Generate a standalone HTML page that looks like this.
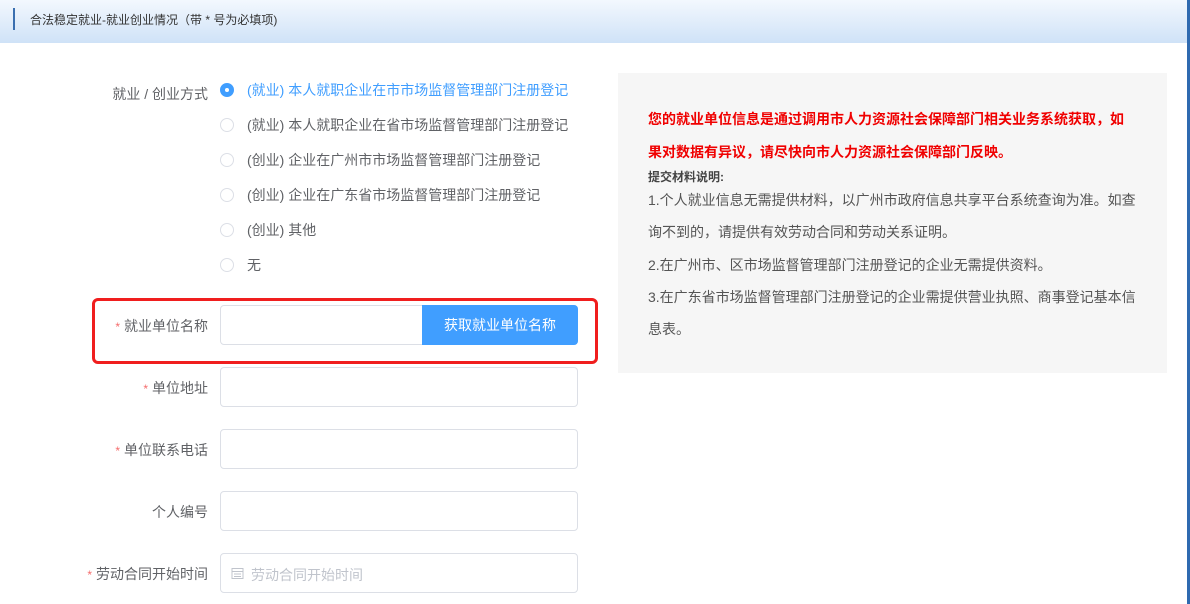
<!DOCTYPE html>
<html><head><meta charset="utf-8"><style>
*{margin:0;padding:0;box-sizing:border-box}
body{width:1190px;height:604px;background:#fff;font-family:"Liberation Sans","Noto Sans CJK SC",sans-serif;position:relative;overflow:hidden;color:#606266}
.hdr{position:absolute;left:0;top:0;width:1190px;height:43px;background:linear-gradient(#f3f8fe,#cfe2f7)}
.bar{position:absolute;left:13px;top:8px;width:2px;height:22px;background:#3a6fb0}
.ht{position:absolute;left:30px;top:11px;font-size:12px;color:#333}
.rb{position:absolute;right:0;top:0;width:3px;height:604px;background:#2f6ab0}
.lbl{position:absolute;right:982px;font-size:14px;color:#606266;white-space:nowrap}
.lbl i{color:#f56c6c;font-style:normal;margin-right:4px;font-size:12px}
.radio{position:absolute;left:220px;font-size:14px;color:#606266;white-space:nowrap;height:20px;line-height:20px}
.radio b{display:inline-block;width:14px;height:14px;border:1px solid #dcdfe6;border-radius:50%;vertical-align:-2px;margin-right:13px;position:relative}
.radio.on{color:#409eff}
.radio.on b{background:#409eff;border-color:#409eff}
.radio.on b:after{content:"";position:absolute;left:4px;top:4px;width:4px;height:4px;border-radius:50%;background:#fff}
.inp{position:absolute;left:220px;width:358px;height:40px;border:1px solid #dcdfe6;border-radius:4px;background:#fff}
.btn{position:absolute;left:422px;top:305px;width:156px;height:40px;background:#409eff;border-radius:0 4px 4px 0;color:#fff;font-size:14px;text-align:center;line-height:40px}
.red{position:absolute;left:92px;top:298px;width:506px;height:66px;border:3px solid #f01e1e;border-radius:6px}
.panel{position:absolute;left:618px;top:73px;width:549px;height:300px;background:#f6f6f6}
.p{position:absolute;left:648px;font-size:14px;color:#555;white-space:nowrap}
.pr{color:#f00000;font-weight:bold}
</style></head><body>
<div class="hdr"></div><div class="bar"></div>
<div class="ht">合法稳定就业-就业创业情况（带 * 号为必填项)</div>
<div class="rb"></div>

<div class="lbl" style="top:84px">就业 / 创业方式</div>
<div class="radio on" style="top:80px"><b></b>(就业) 本人就职企业在市市场监督管理部门注册登记</div>
<div class="radio" style="top:115px"><b></b>(就业) 本人就职企业在省市场监督管理部门注册登记</div>
<div class="radio" style="top:150px"><b></b>(创业) 企业在广州市市场监督管理部门注册登记</div>
<div class="radio" style="top:185px"><b></b>(创业) 企业在广东省市场监督管理部门注册登记</div>
<div class="radio" style="top:220px"><b></b>(创业) 其他</div>
<div class="radio" style="top:255px"><b></b>无</div>

<div class="lbl" style="top:316px"><i>*</i>就业单位名称</div>
<div class="inp" style="top:305px"></div>
<div class="btn">获取就业单位名称</div>
<div class="red"></div>

<div class="lbl" style="top:378px"><i>*</i>单位地址</div>
<div class="inp" style="top:367px"></div>
<div class="lbl" style="top:440px"><i>*</i>单位联系电话</div>
<div class="inp" style="top:429px"></div>
<div class="lbl" style="top:502px">个人编号</div>
<div class="inp" style="top:491px"></div>
<div class="lbl" style="top:564px"><i>*</i>劳动合同开始时间</div>
<div class="inp" style="top:553px"><svg style="position:absolute;left:10px;top:13px" width="13" height="13" viewBox="0 0 13 13"><rect x="1" y="1.5" width="11" height="10" fill="none" stroke="#c0c4cc"/><line x1="1" y1="4.5" x2="12" y2="4.5" stroke="#c0c4cc"/><line x1="3" y1="7" x2="10" y2="7" stroke="#c0c4cc"/><line x1="3" y1="9.5" x2="10" y2="9.5" stroke="#c0c4cc"/></svg><span style="position:absolute;left:30px;top:11px;font-size:14px;color:#c0c4cc">劳动合同开始时间</span></div>

<div class="panel"></div>
<div class="p pr" style="top:109px">您的就业单位信息是通过调用市人力资源社会保障部门相关业务系统获取，如</div>
<div class="p pr" style="top:142px">果对数据有异议，请尽快向市人力资源社会保障部门反映。</div>
<div class="p" style="top:168px;font-weight:bold;font-size:12px;color:#444">提交材料说明:</div>
<div class="p" style="top:190px">1.个人就业信息无需提供材料，以广州市政府信息共享平台系统查询为准。如查</div>
<div class="p" style="top:222px">询不到的，请提供有效劳动合同和劳动关系证明。</div>
<div class="p" style="top:255px">2.在广州市、区市场监督管理部门注册登记的企业无需提供资料。</div>
<div class="p" style="top:287px">3.在广东省市场监督管理部门注册登记的企业需提供营业执照、商事登记基本信</div>
<div class="p" style="top:319px">息表。</div>
</body></html>
